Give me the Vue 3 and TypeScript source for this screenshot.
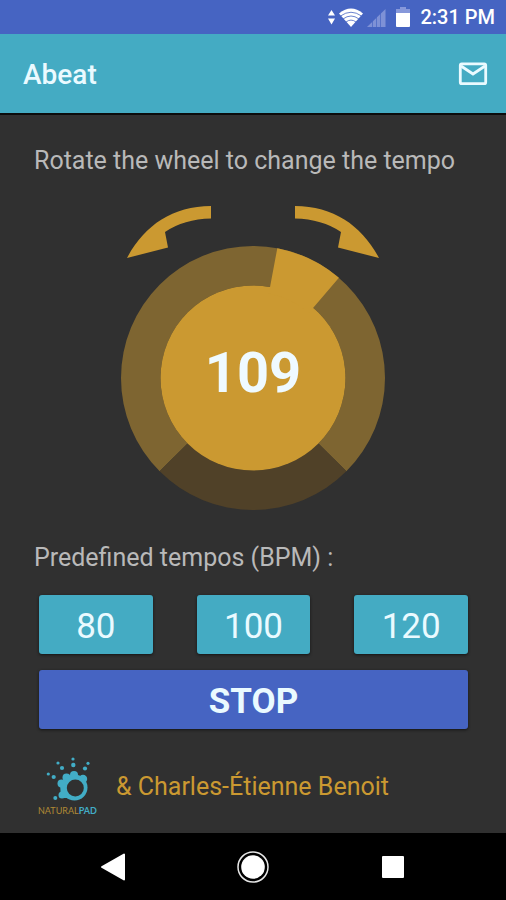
<script setup lang="ts">
import { computed, ref } from 'vue'

const MIN_BPM = 40
const MAX_BPM = 156
const SWEEP = 135
const CENTER = 133
const OUTER = 132
const INNER = 92.5

const presets: number[] = [80, 100, 120]
const tempo = ref<number>(109)
const playing = ref<boolean>(true)

function point(radius: number, degrees: number): string {
  const a = (degrees * Math.PI) / 180
  const x = CENTER + radius * Math.sin(a)
  const y = CENTER - radius * Math.cos(a)
  return `${x.toFixed(2)} ${y.toFixed(2)}`
}

function ring(from: number, to: number, inner: number = INNER): string {
  const large = to - from > 180 ? 1 : 0
  return (
    `M${point(OUTER, from)} A${OUTER} ${OUTER} 0 ${large} 1 ${point(OUTER, to)} ` +
    `L${point(inner, to)} A${inner} ${inner} 0 ${large} 0 ${point(inner, from)}Z`
  )
}

const angle = computed(() => ((tempo.value - MIN_BPM) / (MAX_BPM - MIN_BPM)) * SWEEP * 2 - SWEEP)
const cursor = computed(() => ring(angle.value - 15, angle.value + 15, 86))
</script>

<template>
  <div class="screen">
    <div class="status">
      <svg width="60" height="22" viewBox="0 0 60 22" aria-hidden="true">
        <path fill="#fff" d="M5.500 4 9 9.500H2zM2 12.500h7L5.500 18.500z" />
        <path fill="#fff" d="M25 21 13 7.500Q25-2.500 37 7.500z" />
        <g fill="none" stroke="#4664c2" stroke-width="0.800">
          <path d="M14.500 10q10.500-7.500 21 0M17 13q8-6 16 0M20 16q5-3.800 10 0" />
        </g>
        <path fill="#7e91d6" d="M59.500 3v18H41z" />
        <path stroke="#4664c2" stroke-width="0.700" d="M46.500 2v20M50.500 2v20M54.500 2v20" />
      </svg>
      <svg width="16" height="22" viewBox="0 0 16 22" aria-hidden="true">
        <path fill="#8798da" d="M5 1h6v2h4v5H1V3h4z" />
        <path fill="#fff" d="M1 7h14v13a1 1 0 0 1-1 1H2a1 1 0 0 1-1-1z" />
      </svg>
      <span class="clock">2:31 PM</span>
    </div>

    <header class="appbar">
      <h1>Abeat</h1>
      <button class="mail" type="button" aria-label="Contact">
        <svg width="30" height="24" viewBox="0 0 30 24" aria-hidden="true">
          <rect x="2.300" y="1.800" width="25.400" height="19.900" rx="1.500" fill="none" stroke="#eafaff" stroke-width="2.800" />
          <path d="M3 4 15 12 27 4" fill="none" stroke="#eafaff" stroke-width="2.800" />
        </svg>
      </button>
    </header>

    <main>
      <label class="caption" for="tempo">Rotate the wheel to change the tempo</label>

      <div class="dial">
        <svg class="arrows" viewBox="0 0 252 53" aria-hidden="true">
          <path d="M0 52C17 20 45 0 84 0V12.500Q57 13 38 26L41 41.500Z" />
          <path d="M252 52C235 20 207 0 168 0V12.500Q195 13 214 26L211 41.500Z" />
        </svg>
        <div class="wheel">
          <svg viewBox="0 0 266 266" aria-hidden="true">
            <path class="track" :d="ring(-135, 135)" />
            <path class="gap" :d="ring(135, 225)" />
            <circle class="hub" :cx="CENTER" :cy="CENTER" :r="INNER" />
            <path class="hub" :d="cursor" />
            <text :x="CENTER" y="147" text-anchor="middle">{{ tempo }}</text>
          </svg>
          <input id="tempo" v-model.number="tempo" type="range" :min="MIN_BPM" :max="MAX_BPM" />
        </div>
      </div>

      <p class="caption">Predefined tempos (BPM) :</p>

      <div class="controls">
        <div class="presets">
          <button v-for="bpm in presets" :key="bpm" class="preset" type="button" @click="tempo = bpm">
            {{ bpm }}
          </button>
        </div>
        <button class="toggle" type="button" @click="playing = !playing">
          {{ playing ? 'STOP' : 'START' }}
        </button>
      </div>

      <footer class="credits">
        <div class="brand">
          <svg width="60" height="48" viewBox="0 0 60 48" aria-hidden="true">
            <g fill="#42adc6">
              <circle cx="36.500" cy="30.500" r="13" />
              <circle cx="23.500" cy="26.500" r="4" />
              <circle cx="28.500" cy="20.500" r="4" />
              <circle cx="36" cy="18" r="4" />
              <circle cx="45" cy="22" r="4.200" />
              <circle cx="24" cy="38" r="3.500" />
              <path d="M22 27h9v14h-8z" />
              <circle cx="17.300" cy="41" r="2" />
              <circle cx="15.700" cy="20" r="2.100" />
              <circle cx="10.300" cy="17" r="1.600" />
              <circle cx="24" cy="11" r="2.100" />
              <circle cx="20" cy="6" r="1.600" />
              <circle cx="35.300" cy="8" r="2.200" />
              <circle cx="35" cy="2" r="1.600" />
              <circle cx="47" cy="11.500" r="2.100" />
              <circle cx="50" cy="6.300" r="1.600" />
            </g>
            <circle cx="37.300" cy="31" r="8.500" fill="#303030" />
          </svg>
          <span class="wordmark">NATURAL<b>PAD</b></span>
        </div>
        <span class="author">&amp; Charles-Étienne Benoit</span>
      </footer>
    </main>

    <nav class="system">
      <button type="button" aria-label="Back">
        <svg width="32" height="32" viewBox="0 0 32 32" aria-hidden="true">
          <path d="M5 16 27 3.500v25z" fill="#fff" stroke="#fff" stroke-width="2" stroke-linejoin="round" />
        </svg>
      </button>
      <button type="button" aria-label="Home">
        <svg width="32" height="32" viewBox="0 0 32 32" aria-hidden="true">
          <circle cx="16" cy="16" r="15" fill="none" stroke="#e8e8e8" stroke-width="1.500" />
          <circle cx="16" cy="16" r="11.800" fill="#fff" />
        </svg>
      </button>
      <button type="button" aria-label="Recent apps">
        <svg width="32" height="32" viewBox="0 0 32 32" aria-hidden="true">
          <rect x="5" y="5" width="22" height="22" rx="1" fill="#fff" />
        </svg>
      </button>
    </nav>
  </div>
</template>

<style>
body {
  margin: 0;
  background: #303030;
}
</style>

<style scoped>
.screen {
  display: flex;
  flex-direction: column;
  min-height: 100vh;
  background: #303030;
  font-family: Roboto, "Liberation Sans", sans-serif;
}

button {
  margin: 0;
  padding: 0;
  border: 0;
  background: none;
  color: #eafaff;
  font-family: inherit;
  cursor: pointer;
}

svg {
  display: block;
}

.status {
  display: flex;
  align-items: center;
  justify-content: flex-end;
  gap: 9px;
  height: 34px;
  padding: 0 11px;
  background: #4664c2;
}

.clock {
  color: #fff;
  font-size: 20px;
  font-weight: 500;
  line-height: 36px;
}

.appbar {
  display: flex;
  align-items: center;
  justify-content: space-between;
  height: 79px;
  padding: 0 18px 0 23px;
  background: #44abc3;
  border-bottom: 2px solid #0c0c0c;
}

h1 {
  margin: 0;
  padding-top: 2px;
  color: #eafaff;
  font-size: 28px;
  font-weight: 500;
  line-height: 32px;
}

main {
  display: flex;
  flex: 1;
  flex-direction: column;
  padding: 30px 34px 12px;
}

.caption {
  margin: 0;
  color: #b9b9b9;
  font-size: 25px;
  line-height: 32px;
  white-space: nowrap;
}

.dial {
  display: flex;
  flex-direction: column;
  align-items: center;
  padding: 29px 0 31px;
}

.arrows {
  width: 252px;
  margin-bottom: -14px;
  fill: #cb9931;
}

.wheel {
  position: relative;
  width: 266px;
}

.wheel input {
  position: absolute;
  inset: 0;
  width: 100%;
  height: 100%;
  margin: 0;
  opacity: 0;
  cursor: grab;
}

.track {
  fill: #7e6531;
}

.gap {
  fill: #504128;
}

.hub {
  fill: #cb9931;
}

.wheel text {
  fill: #effaff;
  font-size: 56px;
  font-weight: 700;
}

.controls {
  display: flex;
  flex-direction: column;
  gap: 16px;
  padding: 21px 4px 0 5px;
}

.presets {
  display: grid;
  grid-template-columns: repeat(3, 1fr);
  gap: 44px;
}

.preset,
.toggle {
  height: 59px;
  padding-top: 4px;
  border-radius: 3px;
  box-shadow: 0 1px 3px #141414;
  font-size: 35px;
  line-height: 55px;
}

.preset {
  background: #44abc3;
}

.toggle {
  background: #4664c2;
  font-weight: 700;
}

.credits {
  display: flex;
  align-items: center;
  gap: 18px;
  padding: 28px 4px 0;
}

.brand {
  display: flex;
  flex-direction: column;
  width: 60px;
}

.wordmark {
  color: #b18a35;
  font-family: Lato, sans-serif;
  font-size: 9px;
  line-height: 12px;
}

.wordmark b {
  color: #42adc6;
  font-weight: 700;
}

.author {
  color: #cb9931;
  font-size: 25px;
  line-height: 32px;
  white-space: nowrap;
}

.system {
  display: flex;
  align-items: center;
  justify-content: center;
  gap: 108px;
  height: 67px;
  background: #000;
}
</style>
